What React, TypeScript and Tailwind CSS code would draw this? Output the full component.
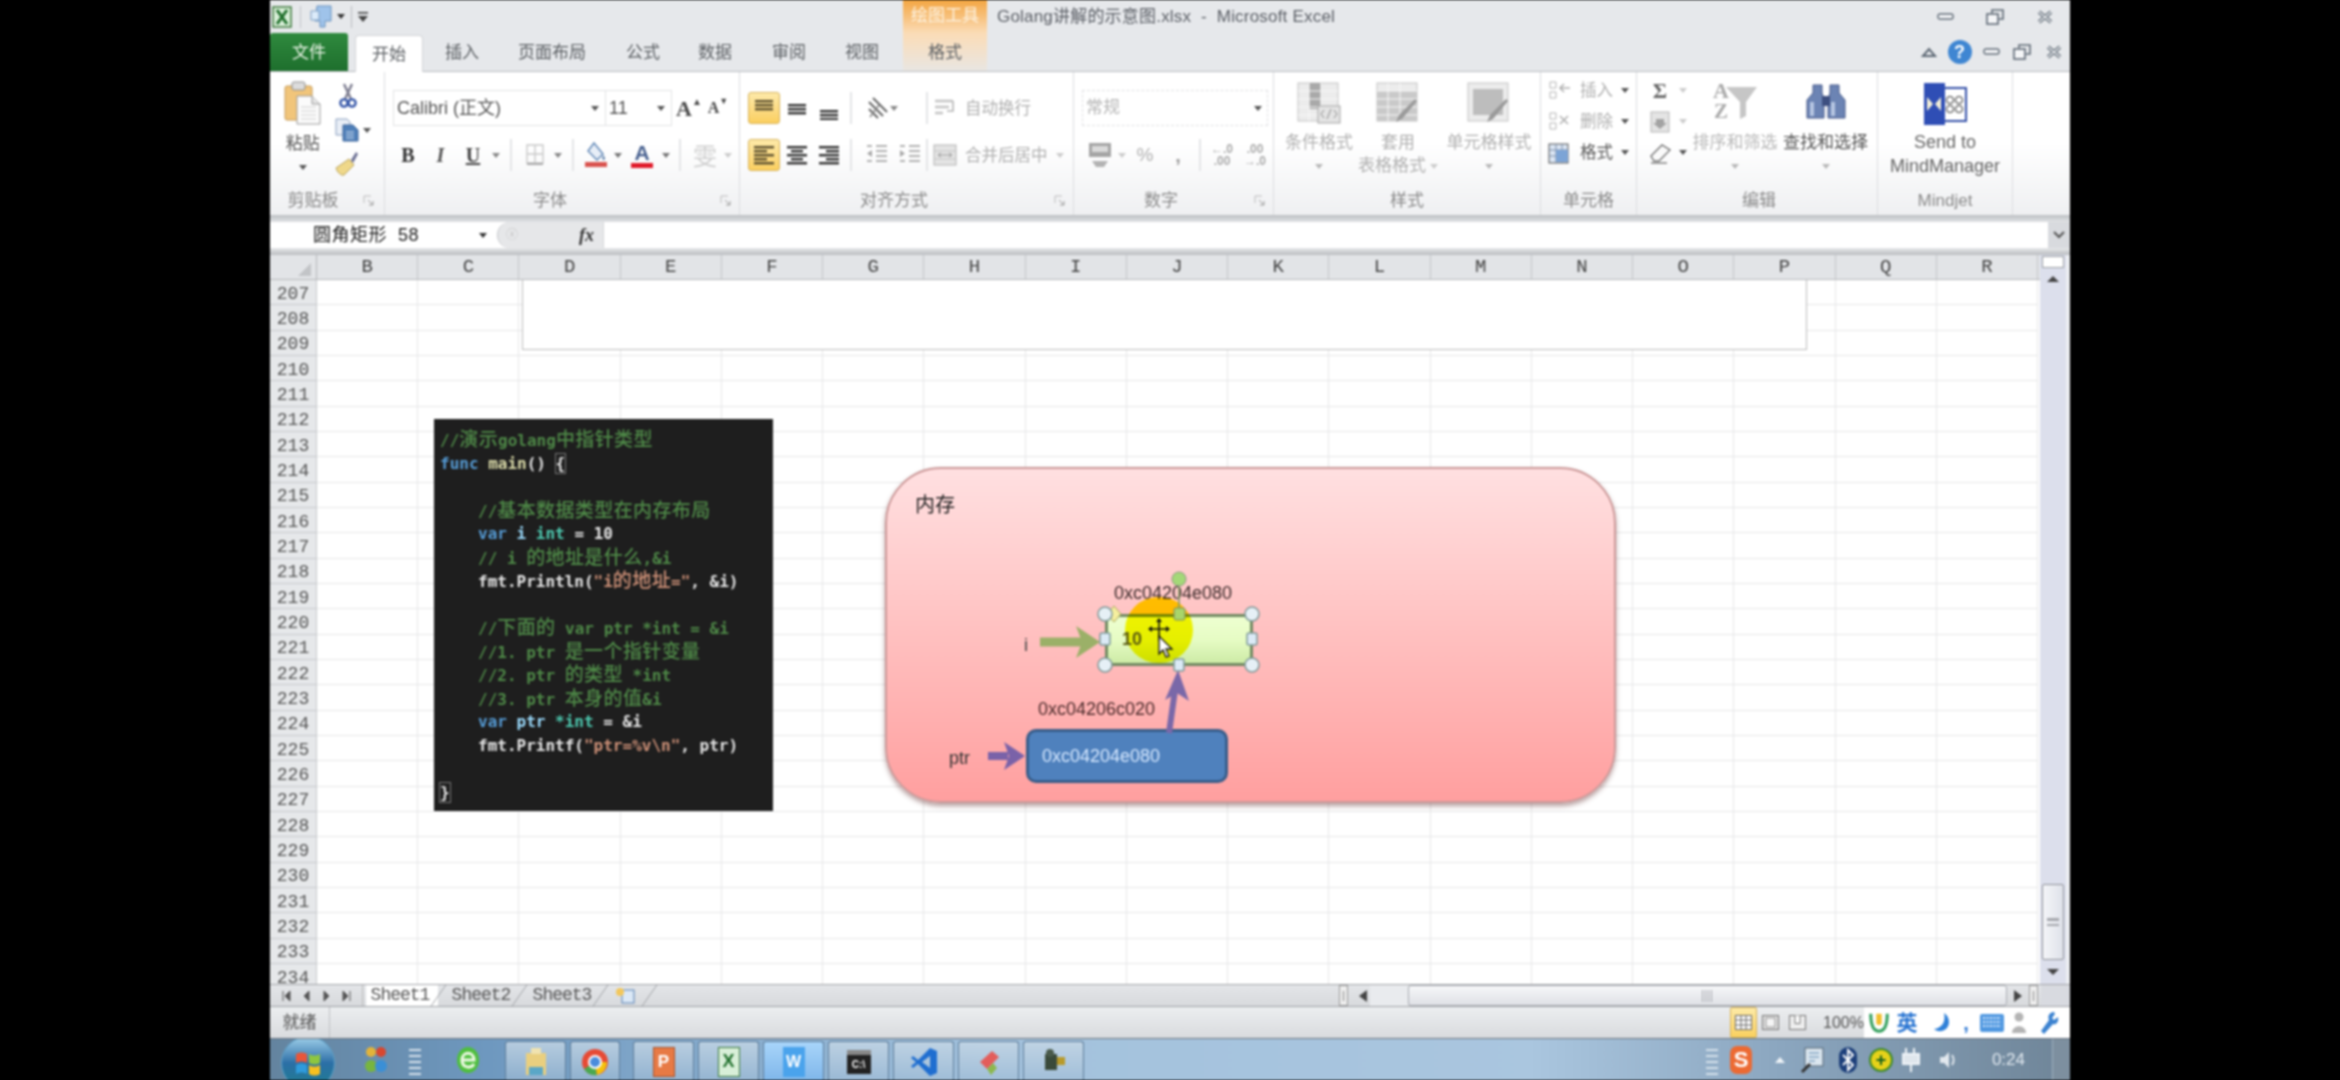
import React from "react";

const COLS = "BCDEFGHIJKLMNOPQR".split("");
const ROWS = Array.from({ length: 28 }, (_, i) => 207 + i);

function Caret({ className = "", color = "#555" }: { className?: string; color?: string }) {
  return (
    <svg width="8" height="5" viewBox="0 0 8 5" className={className}>
      <path d="M0 0h8L4 5z" fill={color} />
    </svg>
  );
}

function Launcher() {
  return (
    <svg width="12" height="12" viewBox="0 0 12 12">
      <path d="M1 1h7M1 1v7" stroke="#bbb" fill="none" />
      <path d="M5 5l5 5M10 6v4H6" stroke="#9a9a9a" fill="none" />
    </svg>
  );
}

function Sep({ className = "" }: { className?: string }) {
  return <div className={"w-[2px] h-[32px] bg-[#e4e5e7] shrink-0 " + className} />;
}

function Slot({ className, children }: { className: string; children?: React.ReactNode }) {
  return <div className={"flex items-center justify-center shrink-0 h-full " + className}>{children}</div>;
}

function Lines({ kind, color = "#333" }: { kind: "top" | "mid" | "bot" | "left" | "center" | "right"; color?: string }) {
  const sets: Record<string, number[][]> = {
    top: [[2, 4, 18], [2, 8, 18], [2, 12, 18]],
    mid: [[2, 8, 18], [2, 12, 18], [2, 16, 18]],
    bot: [[2, 14, 18], [2, 18, 18], [2, 22, 18]],
    left: [[1, 3, 20], [1, 7, 13], [1, 11, 20], [1, 15, 13], [1, 19, 20]],
    center: [[1, 3, 20], [5, 7, 12], [1, 11, 20], [5, 15, 12], [1, 19, 20]],
    right: [[1, 3, 20], [8, 7, 13], [1, 11, 20], [8, 15, 13], [1, 19, 20]],
  };
  return (
    <svg width="22" height="24" viewBox="0 0 22 24">
      {sets[kind].map((l, i) => (
        <rect key={i} x={l[0]} y={l[1]} width={l[2]} height="2.4" fill={color} />
      ))}
    </svg>
  );
}

function Paste() {
  return (
    <svg width="38" height="44" viewBox="0 0 38 44">
      <rect x="1" y="5" width="27" height="34" rx="2" fill="#f1c57a" stroke="#c49a58" />
      <rect x="8" y="1" width="13" height="8" rx="2" fill="#dcdcdc" stroke="#8f8f8f" />
      <path d="M13 15h15l8 8v20H13z" fill="#fbfbfb" stroke="#9a9a9a" />
      <path d="M17 26h15M17 30h15M17 34h15M17 38h15" stroke="#cfcfcf" />
      <path d="M28 15v8h8" fill="#e6e6e6" stroke="#9a9a9a" />
    </svg>
  );
}

function Scissors() {
  return (
    <svg width="20" height="26" viewBox="0 0 20 26">
      <path d="M6 1l7 15M14 1L7 16" stroke="#7d7d90" strokeWidth="2.4" />
      <circle cx="6" cy="20" r="3.6" fill="none" stroke="#3556a8" strokeWidth="2.4" />
      <circle cx="14" cy="20" r="3.6" fill="none" stroke="#3556a8" strokeWidth="2.4" />
    </svg>
  );
}

function CopyIcon() {
  return (
    <svg width="24" height="24" viewBox="0 0 24 24">
      <path d="M1 1h11l3 3v13H1z" fill="#e9eef6" stroke="#8ba0bf" />
      <path d="M8 7h10l5 5v11H8z" fill="#4f7fb8" stroke="#3c659b" />
      <path d="M11 14h8M11 17h8M11 20h8" stroke="#dce8f6" />
    </svg>
  );
}

function Brush() {
  return (
    <svg width="24" height="26" viewBox="0 0 24 26">
      <path d="M16 9l5-8 2 2-5 9z" fill="#6b6f93" />
      <path d="M1 17l13-9 5 6-10 10c-3 1-7-3-8-7z" fill="#efd88a" stroke="#b9a35c" />
    </svg>
  );
}

function Big({ className, icon, lines, caret = true, color = "text-[#9a9a9a]" }: { className: string; icon: React.ReactNode; lines: string[]; caret?: boolean; color?: string }) {
  return (
    <div className={"flex flex-col items-center shrink-0 " + className}>
      <div className="h-[59px] pt-[10px] flex items-start justify-center">{icon}</div>
      {lines.map((t) => (
        <div key={t} className={"h-[24px] leading-[24px] text-[17px] whitespace-nowrap " + color}>{t}</div>
      ))}
      {caret && (
        <div className="h-[22px] flex items-center">
          <Caret color="#b8b8b8" />
        </div>
      )}
    </div>
  );
}

function GridIcon({ kind }: { kind: "cond" | "table" | "cell" }) {
  return (
    <svg width="44" height="42" viewBox="0 0 44 42">
      <rect x="1" y="1" width="40" height="38" fill="#ececec" stroke="#c4c4c4" />
      {kind === "cond" && <rect x="12" y="1" width="12" height="26" fill="#a9a9a9" />}
      {kind === "table" && <rect x="1" y="9" width="40" height="30" fill="#c9c9c9" />}
      {kind === "cell" && <rect x="6" y="7" width="30" height="26" fill="#bdbdbd" />}
      {kind !== "cell" && <path d="M1 9h40M1 17h40M1 25h40M1 33h40M12 1v38M24 1v38" stroke="#f8f8f8" />}
      {kind === "cond" && (
        <>
          <rect x="21" y="24" width="22" height="17" fill="#e4e4e4" stroke="#a5a5a5" />
          <path d="M27 28l-3 4 3 4M37 28l3 4-3 4M34 27l-4 10" stroke="#8d8d8d" fill="none" />
        </>
      )}
      {kind !== "cond" && <path d="M41 19L26 37l-6 3 3-7 16-16z" fill="#9a9a9a" />}
    </svg>
  );
}

function SortIcon() {
  return (
    <div className="relative w-[44px] h-[40px] font-['Liberation_Serif',serif] font-bold text-[#ababab]">
      <svg width="44" height="40" viewBox="0 0 44 40" className="absolute inset-0">
        <path d="M13 5h31L33 20v14l-6 3V20z" fill="#c6c6c6" />
      </svg>
      <div className="absolute left-0 -top-[3px] text-[22px] leading-[24px]">A</div>
      <div className="absolute left-[1px] top-[17px] text-[21px] leading-[24px]">Z</div>
    </div>
  );
}

function Binoculars() {
  return (
    <svg width="40" height="38" viewBox="0 0 40 38">
      <path d="M7 3h9v8l2 6v19H1V18l6-7zM24 3h9v8l6 7v18H22V17l2-6z" fill="#6c84b4" stroke="#46598a" />
      <rect x="16" y="14" width="8" height="10" fill="#3d4f80" />
      <rect x="4" y="20" width="4" height="14" fill="#b6c6e2" />
      <rect x="25" y="20" width="4" height="14" fill="#b6c6e2" />
    </svg>
  );
}

function MindIcon() {
  return (
    <svg width="44" height="44" viewBox="0 0 44 44">
      <rect x="16" y="6" width="27" height="33" fill="#fff" stroke="#3450a8" strokeWidth="2" />
      <rect x="1" y="1" width="21" height="42" fill="#2f4eb5" />
      <path d="M4 15l6 7-6 7zM18 15l-6 7 6 7z" fill="#f4f0d8" />
      <circle cx="27" cy="18" r="3.5" fill="none" stroke="#777" strokeWidth="1.6" />
      <circle cx="36" cy="18" r="3.5" fill="none" stroke="#777" strokeWidth="1.6" />
      <circle cx="27" cy="27" r="3.5" fill="none" stroke="#777" strokeWidth="1.6" />
      <circle cx="36" cy="27" r="3.5" fill="none" stroke="#777" strokeWidth="1.6" />
    </svg>
  );
}

function MiniCell({ kind }: { kind: "ins" | "del" | "fmt" }) {
  return (
    <svg width="24" height="24" viewBox="0 0 24 24">
      {kind === "fmt" ? (
        <>
          <rect x="1" y="3" width="19" height="19" fill="#dbe6f4" stroke="#555" />
          <path d="M1 9h19M1 15h19M8 3v19M14 3v19" stroke="#7a8da8" />
          <rect x="8" y="9" width="12" height="12" fill="#7ca4d6" />
        </>
      ) : (
        <>
          <path d="M2 3h6v6H2zM2 13h6v6H2z" fill="none" stroke="#b5b5b5" />
          <path d={kind === "ins" ? "M12 9h10M16 5l-4 4 4 4" : "M12 6l8 8M20 6l-8 8"} stroke="#b0b0b0" strokeWidth="1.6" fill="none" />
        </>
      )}
    </svg>
  );
}

function WinControls({ compact = false }: { compact?: boolean }) {
  const c = "#5f6a76";
  return (
    <>
      <Slot className={compact ? "w-[29px]" : "w-[48px]"}>
        <svg width="18" height="8" viewBox="0 0 18 8"><rect x="1" y="1" width="15" height="5" rx="2" fill="#f5f6f8" stroke={c} strokeWidth="1.4" /></svg>
      </Slot>
      <Slot className={compact ? "w-[32px]" : "w-[50px]"}>
        <svg width="18" height="16" viewBox="0 0 18 16"><path d="M6 4V1h11v9h-4" fill="none" stroke={c} strokeWidth="1.6" /><rect x="1" y="5" width="11" height="10" fill="#f4f5f7" stroke={c} strokeWidth="1.6" /></svg>
      </Slot>
      <Slot className={compact ? "w-[32px]" : "w-[50px]"}>
        <svg width="18" height="14" viewBox="0 0 18 14"><path d="M3 2l12 10M15 2L3 12" stroke={c} strokeWidth="3.6" /><path d="M3 2l12 10M15 2L3 12" stroke="#f4f5f7" strokeWidth="1.4" /></svg>
      </Slot>
    </>
  );
}

function TitleBar() {
  return (
    <div className="h-[33px] flex items-stretch shrink-0">
      <Slot className="w-[24px]">
        <svg width="20" height="22" viewBox="0 0 20 22"><rect x="1" y="1" width="18" height="20" fill="#d8efd8" stroke="#3f7a3f" strokeWidth="1.5" /><path d="M5 4l10 14M15 4L5 18" stroke="#1f6f2b" strokeWidth="3" /></svg>
      </Slot>
      <Slot className="w-[12px]"><div className="w-[1px] h-[22px] bg-[#c2c5c9]" /></Slot>
      <Slot className="w-[30px]">
        <svg width="24" height="26" viewBox="0 0 24 26"><path d="M8 2h14v15h-6v6h-5v-6H6z" fill="#9fc3ea" stroke="#6b93bf" /><path d="M2 7h8v9H2z" fill="#dcebfa" stroke="#7ea0c4" /></svg>
      </Slot>
      <Slot className="w-[9px]"><Caret color="#333" /></Slot>
      <Slot className="w-[12px]"><div className="w-[1px] h-[22px] bg-[#b9bcc0]" /></Slot>
      <Slot className="w-[12px]">
        <svg width="10" height="12" viewBox="0 0 10 12"><rect width="10" height="1.6" y="1" fill="#444" /><path d="M0 5h10L5 11z" fill="#444" /></svg>
      </Slot>
      <div className="w-[534px] shrink-0" />
      <div className="w-[84px] shrink-0 bg-gradient-to-b from-[#f3a640] via-[#f7c07a] to-[#fbdcb6] text-[#fdf3e2] text-[17px] leading-[31px] text-center">绘图工具</div>
      <div className="ml-[10px] w-[370px] text-[17px] leading-[33px] text-[#5b5f66] whitespace-nowrap tracking-[0.2px]">Golang讲解的示意图.xlsx&nbsp;&nbsp;-&nbsp;&nbsp;Microsoft Excel</div>
      <div className="flex-1" />
      <WinControls />
    </div>
  );
}

function Tab({ className, children }: { className: string; children: React.ReactNode }) {
  return <div className={"flex items-center justify-center shrink-0 text-[17px] text-[#5b5f63] h-full pt-[2px] " + className}>{children}</div>;
}

function TabsRow() {
  return (
    <div className="h-[39px] flex items-stretch shrink-0 border-b border-[#b9bcc0]">
      <Tab className="w-[78px] mr-[7px] !text-[#eef6ea] rounded-t-[3px] bg-gradient-to-b from-[#2f8a3e] to-[#1e6f2d]">文件</Tab>
      <Tab className="w-[68px] bg-white rounded-t-[4px] border border-b-0 border-[#d2d4d7] mt-[2px] !h-[37px]">开始</Tab>
      <Tab className="w-[78px]">插入</Tab>
      <Tab className="w-[102px]">页面布局</Tab>
      <Tab className="w-[80px]">公式</Tab>
      <Tab className="w-[64px]">数据</Tab>
      <Tab className="w-[84px]">审阅</Tab>
      <Tab className="w-[62px]">视图</Tab>
      <Tab className="w-[84px] ml-[10px] bg-gradient-to-b from-[#fbdcb6] to-[#e9e6e2]">格式</Tab>
      <div className="flex-1" />
      <Slot className="w-[20px]">
        <svg width="16" height="10" viewBox="0 0 16 10"><path d="M2 9l6-7 6 7z" fill="none" stroke="#5f6a76" strokeWidth="2" /></svg>
      </Slot>
      <Slot className="w-[38px] pl-[3px]">
        <div className="w-[24px] h-[24px] rounded-full bg-[#3f86d2] text-white text-[18px] font-bold flex items-center justify-center leading-none">?</div>
      </Slot>
      <WinControls compact />
    </div>
  );
}

function Group({ className, children, label, labelW, launcher = true, labelColor = "text-[#8a8a8a]" }: { className: string; children: React.ReactNode; label: string; labelW: string; launcher?: boolean; labelColor?: string }) {
  return (
    <div className={"flex flex-col h-full shrink-0 border-r border-[#dcdde0] " + className}>
      <div className="h-[113px]">{children}</div>
      <div className="h-[30px] flex items-center pt-[2px]">
        <div className={"text-center text-[17px] shrink-0 " + labelW + " " + labelColor}>{label}</div>
        {launcher && <div className="flex-1 flex justify-center pr-[2px]"><Launcher /></div>}
      </div>
    </div>
  );
}

function Ribbon() {
  return (
    <div className="h-[143px] flex shrink-0 bg-gradient-to-b from-white via-white to-[#eff0f2] text-[#666]">
      <Group className="w-[115px]" label="剪贴板" labelW="w-[86px]">
        <div className="flex">
          <div className="w-[66px] flex flex-col items-center pt-[9px]">
            <div className="h-[51px]"><Paste /></div>
            <div className="h-[24px] leading-[24px] text-[17px] text-[#555]">粘贴</div>
            <div className="h-[22px] flex items-center"><Caret /></div>
          </div>
          <div className="w-[49px] pt-[7px] flex flex-col">
            <div className="h-[34px] flex items-center pl-[3px]"><Scissors /></div>
            <div className="h-[34px] flex items-center gap-[4px]"><CopyIcon /><Caret /></div>
            <div className="h-[34px] flex items-center"><Brush /></div>
          </div>
        </div>
      </Group>

      <Group className="w-[355px]" label="字体" labelW="w-[330px]">
        <div className="pt-[18px] pl-[8px]">
          <div className="flex h-[36px]">
            <div className="w-[213px] border border-[#e2e3e5] flex items-center justify-between pl-[3px] pr-[6px] text-[18px] text-[#555]">
              <span>Calibri (正文)</span><Caret />
            </div>
            <div className="w-[66px] border border-l-0 border-[#e2e3e5] flex items-center justify-between pl-[3px] pr-[6px] text-[18px] text-[#555]">
              <span>11</span><Caret />
            </div>
            <div className="w-[32px] ml-[1px] flex items-center justify-center font-['Liberation_Serif',serif] font-bold text-[22px] text-[#4a4a4a]">A<span className="text-[10px] self-start mt-[4px]">▲</span></div>
            <div className="w-[26px] flex items-center justify-center font-['Liberation_Serif',serif] font-bold text-[16px] text-[#4a4a4a]">A<span className="text-[9px] self-start mt-[5px]">▼</span></div>
          </div>
          <div className="flex h-[34px] mt-[12px] items-center -ml-[1px] font-['Liberation_Serif',serif]">
            <Slot className="w-[32px] font-bold text-[20px] text-[#333]">B</Slot>
            <Slot className="w-[33px] italic font-bold text-[20px] text-[#555]">I</Slot>
            <Slot className="w-[32px] font-bold text-[20px] text-[#444] underline">U</Slot>
            <Slot className="w-[14px]"><Caret color="#888" /></Slot>
            <Sep className="ml-[7px]" />
            <Slot className="w-[36px] ml-[5px]">
              <svg width="22" height="26" viewBox="0 0 22 26"><path d="M3 3h16v18H3zM3 12h16M11 3v18" fill="none" stroke="#c9c9c9" strokeWidth="1.4" /><rect x="3" y="21" width="16" height="2" fill="#aaa" /></svg>
            </Slot>
            <Slot className="w-[10px]"><Caret color="#888" /></Slot>
            <Sep className="ml-[9px]" />
            <Slot className="w-[36px] ml-[4px]">
              <svg width="26" height="28" viewBox="0 0 26 28"><path d="M11 2l9 11-6 6-9-9z" fill="#e7eef7" stroke="#5f86b5" strokeWidth="1.4" /><path d="M20 14c2 2 3 4 1 5s-2-3-1-5z" fill="#6f8db3" /><rect x="2" y="21" width="22" height="5" fill="#d9534f" /></svg>
            </Slot>
            <Slot className="w-[8px]"><Caret color="#777" /></Slot>
            <Slot className="w-[40px]">
              <div className="flex flex-col items-center font-['Liberation_Sans',sans-serif] text-[21px] font-bold text-[#47608f] leading-[20px]">A<div className="w-[22px] h-[5px] bg-[#e01b2b]" /></div>
            </Slot>
            <Slot className="w-[8px]"><Caret color="#777" /></Slot>
            <Sep className="ml-[9px]" />
            <Slot className="w-[36px] ml-[6px] text-[24px] text-[#cfcfcf] font-['Noto_Sans_CJK_SC',sans-serif]">雯</Slot>
            <Slot className="w-[10px]"><Caret color="#ccc" /></Slot>
          </div>
        </div>
      </Group>

      <Group className="w-[334px]" label="对齐方式" labelW="w-[308px]">
        <div className="pt-[20px] pl-[8px]">
          <div className="flex h-[32px] items-center">
            <Slot className="w-[32px] bg-gradient-to-b from-[#fde9a8] to-[#fbcf5f] border border-[#d8b45c] rounded-[3px]"><Lines kind="top" color="#5e5230" /></Slot>
            <Slot className="w-[33px]"><Lines kind="mid" /></Slot>
            <Slot className="w-[32px]"><Lines kind="bot" /></Slot>
            <Sep className="ml-[5px]" />
            <Slot className="w-[24px] ml-[14px]">
              <svg width="24" height="26" viewBox="0 0 24 26"><path d="M3 7l14 14M7 3l14 14M3 14l9 9" stroke="#666" strokeWidth="2" /><path d="M4 22l9-12" stroke="#8a8a8a" strokeWidth="1.5" /></svg>
            </Slot>
            <Slot className="w-[8px]"><Caret color="#888" /></Slot>
            <Sep className="ml-[28px]" />
            <Slot className="w-[26px] ml-[4px]">
              <svg width="24" height="22" viewBox="0 0 24 22"><path d="M2 4h18M2 10h14M2 16h8" stroke="#c4c4c4" strokeWidth="2.4" /><path d="M20 4v10h-6" stroke="#b4b4b4" fill="none" strokeWidth="1.6" /></svg>
            </Slot>
            <div className="ml-[7px] text-[16.5px] text-[#b0b0b0] whitespace-nowrap">自动换行</div>
          </div>
          <div className="flex h-[32px] mt-[15px] items-center">
            <Slot className="w-[32px] bg-gradient-to-b from-[#fde9a8] to-[#fbcf5f] border border-[#d8b45c] rounded-[3px]"><Lines kind="left" color="#5e5230" /></Slot>
            <Slot className="w-[33px]"><Lines kind="center" /></Slot>
            <Slot className="w-[32px]"><Lines kind="right" /></Slot>
            <Sep className="ml-[5px]" />
            <Slot className="w-[34px] ml-[8px]">
              <svg width="24" height="22" viewBox="0 0 24 22"><path d="M11 2h11M11 7h11M11 12h11M11 17h11M2 2h5M2 17h5" stroke="#b2b2b2" strokeWidth="2" /><path d="M7 6L2 9.5 7 13z" fill="#a8a8a8" /></svg>
            </Slot>
            <Slot className="w-[32px]">
              <svg width="24" height="22" viewBox="0 0 24 22"><path d="M11 2h11M11 7h11M11 12h11M11 17h11M2 2h5M2 17h5" stroke="#b2b2b2" strokeWidth="2" /><path d="M2 6l5 3.5L2 13z" fill="#a8a8a8" /></svg>
            </Slot>
            <Sep />
            <Slot className="w-[26px] ml-[4px]">
              <svg width="24" height="24" viewBox="0 0 24 24"><rect x="1" y="2" width="22" height="20" fill="#e4e4e4" stroke="#b4b4b4" /><path d="M1 8h22M1 16h22" stroke="#c4c4c4" /><path d="M5 12h14M5 12l3-2M5 12l3 2M19 12l-3-2M19 12l-3 2" stroke="#9a9a9a" /></svg>
            </Slot>
            <div className="ml-[7px] text-[16.5px] text-[#b0b0b0] whitespace-nowrap">合并后居中</div>
            <Caret color="#ccc" className="ml-[8px]" />
          </div>
        </div>
      </Group>

      <Group className="w-[200px]" label="数字" labelW="w-[174px]">
        <div className="pt-[18px] pl-[8px]">
          <div className="w-[186px] h-[36px] border border-dashed border-[#e0e1e3] flex items-center justify-between pl-[3px] pr-[5px] text-[17px] text-[#b5b5b5]">
            <span>常规</span><Caret color="#555" />
          </div>
          <div className="flex h-[34px] mt-[12px] items-center">
            <Slot className="w-[36px]">
              <svg width="26" height="28" viewBox="0 0 26 28"><rect x="2" y="2" width="22" height="14" fill="#a5a5a5" /><rect x="5" y="5" width="16" height="6" fill="#dadada" /><path d="M5 20h16l-4 6H9z" fill="#b3b3b3" /></svg>
            </Slot>
            <Slot className="w-[8px]"><Caret color="#ccc" /></Slot>
            <Slot className="w-[38px] text-[19px] text-[#b0b0b0]">%</Slot>
            <Slot className="w-[28px] text-[20px] font-bold text-[#9c9c9c]">,</Slot>
            <Sep className="ml-[7px]" />
            <Slot className="w-[42px] text-[12px] leading-[12px] text-[#aaa] font-bold text-center flex-col">
              <span>←.0</span><span>.00</span>
            </Slot>
            <Slot className="w-[24px] text-[12px] leading-[12px] text-[#aaa] font-bold text-center flex-col">
              <span>.00</span><span>→.0</span>
            </Slot>
          </div>
        </div>
      </Group>

      <Group className="w-[267px]" label="样式" labelW="w-full" launcher={false}>
        <div className="flex">
          <Big className="w-[90px]" icon={<GridIcon kind="cond" />} lines={["条件格式"]} color="text-[#b0b0b0]" />
          <div className="w-[68px] flex flex-col items-center shrink-0">
            <div className="h-[59px] pt-[10px]"><GridIcon kind="table" /></div>
            <div className="h-[24px] leading-[24px] text-[17px] text-[#b0b0b0]">套用</div>
            <div className="h-[22px] flex items-center text-[17px] text-[#b0b0b0] whitespace-nowrap gap-[4px]">表格格式<Caret color="#ccc" /></div>
          </div>
          <Big className="w-[109px] pl-[5px]" icon={<GridIcon kind="cell" />} lines={["单元格样式"]} color="text-[#b0b0b0]" />
        </div>
      </Group>

      <Group className="w-[96px]" label="单元格" labelW="w-full" launcher={false}>
        <div className="pt-[3px]">
          {([["ins", "插入", "text-[#b0b0b0]"], ["del", "删除", "text-[#b0b0b0]"], ["fmt", "格式", "text-[#555]"]] as const).map(([k, t, c]) => (
            <div key={t} className="h-[31px] flex items-center pl-[7px]">
              <Slot className="w-[32px] justify-start"><MiniCell kind={k} /></Slot>
              <span className={"w-[35px] text-[16.5px] whitespace-nowrap " + c}>{t}</span>
              <Caret className="ml-[6px]" />
            </div>
          ))}
        </div>
      </Group>

      <Group className="w-[241px]" label="编辑" labelW="w-[244px]" launcher={false}>
        <div className="flex">
          <div className="w-[60px] pt-[3px] shrink-0">
            <div className="h-[31px] flex items-center pl-[11px] gap-[7px]">
              <span className="w-[24px] text-center text-[22px] font-bold text-[#666] font-['Liberation_Serif',serif]">Σ</span><Caret color="#ccc" />
            </div>
            <div className="h-[31px] flex items-center pl-[11px] gap-[7px]">
              <svg width="24" height="24" viewBox="0 0 24 24"><rect x="3" y="2" width="18" height="20" fill="#e4e4e4" stroke="#b6b6b6" /><path d="M8 9h8v4h3l-7 6-7-6h3z" fill="#a3a3a3" /></svg>
              <Caret color="#ccc" />
            </div>
            <div className="h-[31px] flex items-center pl-[11px] gap-[7px]">
              <svg width="24" height="22" viewBox="0 0 24 22"><path d="M3 14L14 3l8 5-11 11H6z" fill="#fafafa" stroke="#777" strokeWidth="1.4" /><path d="M3 21h16" stroke="#777" strokeWidth="1.4" /></svg>
              <Caret />
            </div>
          </div>
          <Big className="w-[76px]" icon={<SortIcon />} lines={["排序和筛选"]} color="text-[#b8b8b8]" />
          <Big className="w-[105px]" icon={<Binoculars />} lines={["查找和选择"]} color="text-[#555]" />
        </div>
      </Group>

      <Group className="w-[135px]" label="Mindjet" labelW="w-full" launcher={false}>
        <div className="flex flex-col items-center pt-[10px]">
          <div className="h-[48px]"><MindIcon /></div>
          <div className="h-[24px] leading-[24px] text-[18px] text-[#666]">Send to</div>
          <div className="h-[24px] leading-[24px] text-[18px] text-[#666]">MindManager</div>
        </div>
      </Group>
      <div className="flex-1" />
    </div>
  );
}

function FormulaBar() {
  return (
    <div className="h-[26px] bg-white flex items-center shrink-0">
      <div className="w-[227px] pl-[43px] flex items-center text-[18px] text-[#222] whitespace-nowrap">
        <span className="w-[166px] tracking-[0.5px]">圆角矩形&nbsp;&nbsp;58</span>
        <Caret color="#333" />
      </div>
      <div className="w-[106px] h-full rounded-l-[14px] bg-[#e6e7e9] border-l border-[#c6c8cc] flex items-center justify-between pl-[8px] pr-[9px]">
        <span className="text-[12px] text-[#c4c4c4]">ⓧ</span>
        <span className="font-['Liberation_Serif',serif] italic font-bold text-[18px] text-[#333]">fx</span>
      </div>
      <div className="flex-1 h-full border-l border-[#d6d7da]" />
      <Slot className="w-[22px] bg-[#d8dade]">
        <svg width="12" height="8" viewBox="0 0 12 8"><path d="M1 1l5 5 5-5" fill="none" stroke="#555" strokeWidth="2" /></svg>
      </Slot>
    </div>
  );
}

const blue = "text-[#569cd6]";
const green = "text-[#4f8a48] font-bold";
const white = "text-[#e6e6e6] font-bold";
const yellow = "text-[#dcdcaa] font-bold";
const teal = "text-[#4ec9b0] font-bold";
const sky = "text-[#9cdcfe] font-bold";
const orange = "text-[#ce9178]";

function Z({ children }: { children: React.ReactNode }) {
  return <span className="text-[19px] font-['Noto_Sans_CJK_SC',sans-serif] font-medium leading-none tracking-[0.4px]">{children}</span>;
}

function CodeLine({ indent = false, children }: { indent?: boolean; children?: React.ReactNode }) {
  return <div className={"h-[23.5px] leading-[23.5px] whitespace-pre " + (indent ? "pl-[38px]" : "")}>{children}</div>;
}

function CodeBox() {
  return (
    <div className="absolute left-[164px] top-[139px] w-[339px] h-[392px] bg-[#1e1e1e] pl-[6px] pt-[9px] text-[16px] font-['DejaVu_Sans_Mono','Noto_Sans_CJK_SC',monospace] overflow-hidden">
      <CodeLine><span className={green}>//<Z>演示</Z>golang<Z>中指针类型</Z></span></CodeLine>
      <CodeLine><span className={blue + " font-bold"}>func</span> <span className={yellow}>main</span><span className={white}>()</span> <span className={white + " outline outline-1 outline-[#777]"}>{"{"}</span></CodeLine>
      <CodeLine />
      <CodeLine indent><span className={green}>//<Z>基本数据类型在内存布局</Z></span></CodeLine>
      <CodeLine indent><span className={blue + " font-bold"}>var</span> <span className={sky}>i</span> <span className={teal}>int</span> <span className={white}>= 10</span></CodeLine>
      <CodeLine indent><span className={green}>// i <Z>的地址是什么</Z>,&amp;i</span></CodeLine>
      <CodeLine indent><span className={white}>fmt.Println(</span><span className={orange + " font-bold"}>"i<Z>的地址</Z>="</span><span className={white}>, &amp;i)</span></CodeLine>
      <CodeLine />
      <CodeLine indent><span className={green}>//<Z>下面的</Z> var ptr *int = &amp;i</span></CodeLine>
      <CodeLine indent><span className={green}>//1. ptr <Z>是一个指针变量</Z></span></CodeLine>
      <CodeLine indent><span className={green}>//2. ptr <Z>的类型</Z> *int</span></CodeLine>
      <CodeLine indent><span className={green}>//3. ptr <Z>本身的值</Z>&amp;i</span></CodeLine>
      <CodeLine indent><span className={blue + " font-bold"}>var</span> <span className={sky}>ptr</span> <span className={teal}>*int</span> <span className={white}>= &amp;i</span></CodeLine>
      <CodeLine indent><span className={white}>fmt.Printf(</span><span className={orange + " font-bold"}>"ptr=%v\n"</span><span className={white}>, ptr)</span></CodeLine>
      <CodeLine />
      <CodeLine><span className={white + " outline outline-1 outline-[#777]"}>{"}"}</span></CodeLine>
    </div>
  );
}

function Diagram() {
  const sq = [[1105, 639], [1252, 639], [1179, 665]];
  const rd = [[1105, 614], [1252, 614], [1105, 665], [1252, 665]];
  return (
    <div className="absolute left-[615px] top-[187px] w-[731px] h-[336px] rounded-[56px] border-2 border-[#c99] bg-gradient-to-b from-[#ffe0e1] to-[#ff9f9f] shadow-[0_3px_5px_rgba(90,40,40,0.45)] text-[18px] text-[#333]">
      <div className="absolute left-[28px] top-[21px] text-[20px] text-[#222]">内存</div>
      <div className="absolute left-[227px] top-[112px] leading-[24px] text-[#3a2a2a]">0xc04204e080</div>
      <div className="absolute left-[218px] top-[145px] w-[148px] h-[52px] border-[3px] border-[#718a62] bg-gradient-to-b from-[#eeffd0] via-[#e6fcc4] to-[#cdeba6]" />
      <div className="absolute left-[238px] top-[128px] w-[68px] h-[66px] rounded-full bg-[#fff200] mix-blend-multiply" />
      <div className="absolute left-[235px] top-[158px] leading-[24px] font-bold text-[#5a5a10]">10</div>
      <div className="absolute left-[137px] top-[164px] leading-[24px] text-[#444]">i</div>
      <div className="absolute left-[151px] top-[228px] leading-[24px] text-[#4a2a2a]">0xc04206c020</div>
      <div className="absolute left-[139px] top-[260px] w-[202px] h-[54px] rounded-[10px] border-[3px] border-[#385d8a] bg-[#4f81bd] flex items-center pl-[13px] text-[#d6e8ff]">0xc04204e080</div>
      <div className="absolute left-[62px] top-[277px] leading-[24px] text-[#333]">ptr</div>
      <svg viewBox="885 467 729 334" className="absolute -left-[2px] -top-[2px] w-[729px] h-[334px] overflow-visible">
        <path d="M1040 642h42" stroke="#9bb068" strokeWidth="9" />
        <path d="M1076 626l24 16-24 16 6-16z" fill="#9bb068" />
        <path d="M988 756h20" stroke="#7a62a8" strokeWidth="8" />
        <path d="M1004 742l21 14-21 14 5-14z" fill="#7a62a8" />
        <path d="M1169 733l7-50" stroke="#7a68a8" strokeWidth="6" />
        <path d="M1178 670l-13 30 12-7 12 8z" fill="#7a68a8" />
        <path d="M1179 586v28" stroke="#7f9a60" strokeWidth="1.5" />
        <circle cx="1179" cy="579" r="7" fill="#a4d878" stroke="#8a9a80" />
        <rect x="1174" y="608" width="11" height="12" rx="2" fill="#a9d56a" stroke="#788a60" />
        <path d="M1114 606l7 8-7 8-7-8z" fill="#f5ef9e" stroke="#a8a860" />
        {rd.map(([x, y]) => (
          <circle key={x + "-" + y} cx={x} cy={y} r="7" fill="#e6f0f6" stroke="#7f9a9a" strokeWidth="1.5" />
        ))}
        {sq.map(([x, y]) => (
          <rect key={x + "-" + y} x={x - 5} y={y - 6} width="10" height="12" rx="2" fill="#dbeaf6" stroke="#7f9a9a" strokeWidth="1.5" />
        ))}
        <path d="M1159 619v22M1149 629h20" stroke="#111" strokeWidth="1.6" />
        <path d="M1159 618l-3 4h6zM1148 629l4-3v6zM1170 629l-4-3v6z" fill="#111" />
        <path d="M1159 636v18l4-4 3 7 3-1-3-7h6z" fill="#fff" stroke="#111" strokeWidth="1.3" />
      </svg>
    </div>
  );
}

function Sheet() {
  return (
    <div className="flex-1 min-h-0 flex overflow-hidden">
      <div className="w-[1770px] flex flex-col">
        <div className="h-[25px] grid grid-cols-[47px_repeat(17,101.24px)] shrink-0 bg-[#e2e4e7] border-b border-[#b6b8bb] font-['Liberation_Mono',monospace] text-[19px] text-[#444]">
          <div className="border-r border-[#b6b8bb] flex items-end justify-end pr-[5px] pb-[3px]">
            <svg width="13" height="13" viewBox="0 0 13 13"><path d="M13 0v13H0z" fill="#c2c4c7" /></svg>
          </div>
          {COLS.map((c) => (
            <div key={c} className="border-r border-[#c4c6c9] flex items-center justify-center leading-none">{c}</div>
          ))}
        </div>
        <div className="relative h-[704px] overflow-hidden bg-white">
          <div className="grid grid-cols-[47px_repeat(17,101.24px)] auto-rows-[25.33px] font-['Liberation_Mono',monospace]">
            {ROWS.map((r) => (
              <React.Fragment key={r}>
                <div className="bg-[#e6e8ea] border-r border-b border-[#c8cacd] text-[18px] text-[#555] flex items-center justify-center pt-[3px] leading-none">{r}</div>
                {COLS.map((c) => (
                  <div key={c} className="border-r border-b border-[#e6e7e8]" />
                ))}
              </React.Fragment>
            ))}
          </div>
          <div className="absolute left-[252px] top-0 w-[1285px] h-[70px] border border-t-0 border-[#bdbdbd] bg-white" />
          <CodeBox />
          <Diagram />
        </div>
      </div>
      <div className="w-[30px] flex">
        <div className="w-[26px] bg-[#dcdfec] flex flex-col items-center">
          <div className="h-[12px] w-[22px] mt-[1px] bg-white border border-[#9a9da3]" />
          <div className="h-[22px] flex items-center"><svg width="12" height="6" viewBox="0 0 12 6"><path d="M0 6h12L6 0z" fill="#444" /></svg></div>
          <div className="flex-1" />
          <div className="h-[76px] w-[22px] rounded-[2px] border border-[#8f9299] bg-gradient-to-r from-[#f4f5f8] to-[#dfe2ea] flex items-center justify-center">
            <div className="w-[12px] h-[8px] border-y-2 border-[#a5a7ad] bg-[linear-gradient(#a5a7ad_1px,transparent_1px)]" />
          </div>
          <div className="h-[24px] flex items-center"><svg width="12" height="6" viewBox="0 0 12 6"><path d="M0 0h12L6 6z" fill="#444" /></svg></div>
        </div>
        <div className="flex-1 bg-[#eceef2]" />
      </div>
    </div>
  );
}

function SheetTab({ className, children }: { className: string; children: React.ReactNode }) {
  return (
    <div className={"flex items-center justify-center h-full text-[18px] text-[#555] shrink-0 font-['Liberation_Mono',monospace] tracking-[-1px] " + className}>
      {children}
    </div>
  );
}

function Slant() {
  return <div className="w-[1px] h-full bg-[#a0a2a6] -skew-x-[35deg] shrink-0" />;
}

function TabsBar() {
  return (
    <div className="h-[23px] flex shrink-0 bg-gradient-to-b from-[#e3e5e8] to-[#d8dadd] border-t border-[#a4a6aa] border-b border-b-[#9ea1a5]">
      <div className="w-[93px] flex items-center justify-around px-[6px] shrink-0 border-r border-[#bbb]">
        {["M2 1v10M9 1L4 6l5 5z", "M8 1L3 6l5 5z", "M3 1l5 5-5 5z", "M9 1v10M2 1l5 5-5 5z"].map((d) => (
          <svg key={d} width="11" height="12" viewBox="0 0 11 12"><path d={d} fill="#555" stroke="#555" /></svg>
        ))}
      </div>
      <SheetTab className="w-[72px] ml-[3px] bg-white pr-[4px]">Sheet1</SheetTab>
      <Slant />
      <SheetTab className="w-[80px] pl-[4px]">Sheet2</SheetTab>
      <Slant />
      <SheetTab className="w-[80px] pl-[4px]">Sheet3</SheetTab>
      <Slant />
      <Slot className="w-[48px]">
        <svg width="22" height="18" viewBox="0 0 22 18"><rect x="8" y="3" width="12" height="13" fill="#dbe8f6" stroke="#5b83b5" /><circle cx="6" cy="5" r="4" fill="#f2c75c" /></svg>
      </Slot>
      <Slant />
      <div className="w-[689px] shrink-0" />
      <Slot className="w-[9px] border border-[#999] bg-[#eee] mr-[8px]"><div className="w-[1px] h-[10px] bg-[#888]" /></Slot>
      <Slot className="w-[14px]"><svg width="8" height="12" viewBox="0 0 8 12"><path d="M8 0v12L0 6z" fill="#444" /></svg></Slot>
      <div className="w-[38px] shrink-0 bg-[#e9ebee]" />
      <div className="w-[599px] shrink-0 rounded-[3px] border border-[#a9acb2] bg-gradient-to-b from-[#f6f7f9] to-[#dfe1e6] flex items-center justify-center">
        <div className="w-[11px] h-[12px] bg-[repeating-linear-gradient(90deg,#a5a7ad_0_1px,transparent_1px_3px)]" />
      </div>
      <Slot className="w-[22px]"><svg width="8" height="12" viewBox="0 0 8 12"><path d="M0 0v12l8-6z" fill="#444" /></svg></Slot>
      <Slot className="w-[9px] border border-[#999] bg-[#eee]"><div className="w-[1px] h-[10px] bg-[#888]" /></Slot>
      <div className="flex-1 bg-[#d8dae0] ml-[3px]" />
    </div>
  );
}

function StatusBar() {
  return (
    <div className="h-[31px] flex items-center shrink-0 bg-gradient-to-b from-[#eceef0] to-[#d9dbde] text-[#555]">
      <div className="w-[60px] h-full flex items-center justify-center text-[17px] border-r border-[#bfc1c4] shrink-0">就绪</div>
      <div className="w-[1400px] shrink-0" />
      <Slot className="w-[27px] bg-gradient-to-b from-[#fdeaa6] to-[#f9d05e] border border-[#d8b45c] rounded-[2px]">
        <svg width="17" height="15" viewBox="0 0 17 15"><rect x=".5" y=".5" width="16" height="14" fill="#fff" stroke="#666" /><path d="M.5 5h16M.5 10h16M6 .5v14M11 .5v14" stroke="#666" /></svg>
      </Slot>
      <Slot className="w-[26px]">
        <svg width="17" height="15" viewBox="0 0 17 15"><rect x=".5" y=".5" width="16" height="14" fill="#ddd" stroke="#777" /><rect x="4" y="3" width="9" height="9" fill="#f5f5f5" stroke="#999" /></svg>
      </Slot>
      <Slot className="w-[29px]">
        <svg width="17" height="15" viewBox="0 0 17 15"><rect x=".5" y=".5" width="16" height="14" fill="#eee" stroke="#777" /><path d="M6 .5v8h5v-8" fill="#fff" stroke="#777" /></svg>
      </Slot>
      <div className="w-[52px] text-[16px] pl-[11px] overflow-hidden whitespace-nowrap shrink-0">100%</div>
      <div className="flex-1 h-full bg-white flex items-center pl-[4px]">
        <Slot className="w-[22px]">
          <svg width="24" height="26" viewBox="0 0 24 26"><path d="M3 3c0 14 3 19 9 19s9-5 9-19" fill="none" stroke="#36a15f" strokeWidth="3.4" /><path d="M9 3v10c0 3 6 3 6 0V3z" fill="#f1bf2d" /></svg>
        </Slot>
        <Slot className="w-[34px] text-[21px] text-[#2b76d2] font-bold">英</Slot>
        <Slot className="w-[34px]">
          <svg width="18" height="24" viewBox="0 0 18 24"><path d="M12 2c2 9-2 15-10 16 6 5 15 1 15-7 0-4-2-7-5-9z" fill="#2f80d8" /></svg>
        </Slot>
        <Slot className="w-[16px] text-[20px] font-bold text-[#2b76d2] leading-none">,</Slot>
        <Slot className="w-[36px]">
          <svg width="26" height="20" viewBox="0 0 26 20"><rect x="1" y="1" width="24" height="18" rx="2" fill="#4f97e0" /><path d="M4 5h18M4 9h18M4 13h18" stroke="#d6eaff" strokeWidth="2" strokeDasharray="2 1.5" /></svg>
        </Slot>
        <Slot className="w-[18px]">
          <svg width="18" height="24" viewBox="0 0 18 24"><circle cx="9" cy="6" r="4.5" fill="#b4b4b4" /><path d="M2 22c0-9 14-9 14 0z" fill="#b4b4b4" /></svg>
        </Slot>
        <Slot className="w-[42px]">
          <svg width="20" height="24" viewBox="0 0 20 24"><path d="M15 1c-4 0-7 4-5 8L2 20l3 3 9-10c3 1 6-2 5-7l-4 3-2-2 3-4z" fill="#3b82d0" /></svg>
        </Slot>
      </div>
    </div>
  );
}

function TaskBtn({ active = false, className = "", children }: { active?: boolean; className?: string; children: React.ReactNode }) {
  return (
    <div className={"h-[40px] mt-[2px] w-[61px] shrink-0 rounded-t-[3px] border border-b-0 border-[#5d7c99] flex items-center justify-center " + (active ? "bg-gradient-to-b from-[#a8d5fa] to-[#7fb6ea] " : "bg-gradient-to-b from-[#c7d8e6]/80 to-[#9ebbd5]/60 ") + className}>
      {children}
    </div>
  );
}

function Dots() {
  return <div className="w-[12px] h-[30px] bg-[repeating-linear-gradient(0deg,#d4e0ea_0_2px,transparent_2px_6px)]" />;
}

function Taskbar() {
  return (
    <div className="h-[42px] flex shrink-0 overflow-hidden bg-[linear-gradient(90deg,#64849f_0%,#6e98bf_12%,#a3c2dd_40%,#aac6df_70%,#8ba6bf_84%,#6f8598_100%)] border-t border-[#6a7480]">
      <div className="w-[76px] shrink-0 flex items-center justify-center">
        <div className="w-[54px] h-[54px] mt-[6px] rounded-full bg-gradient-to-b from-[#9fd0ea] via-[#2b6fa6] to-[#1f7d8f] border border-[#5ba0c8] flex items-center justify-center">
          <svg width="28" height="26" viewBox="0 0 28 26"><path d="M2 4c4-2 7-2 11 0v9c-4-2-7-2-11 0z" fill="#e8563a" /><path d="M15 4c4 2 7 2 11 0v9c-4 2-7 2-11 0z" fill="#8ec63f" /><path d="M2 15c4-2 7-2 11 0v9c-4-2-7-2-11 0z" fill="#2f9bdc" /><path d="M15 15c4 2 7 2 11 0v9c-4 2-7 2-11 0z" fill="#f6c01f" /></svg>
        </div>
      </div>
      <Slot className="w-[60px]">
        <svg width="22" height="32" viewBox="0 0 22 32"><circle cx="6" cy="8" r="5" fill="#e2b33a" /><circle cx="16" cy="8" r="5" fill="#d9472f" /><circle cx="6" cy="22" r="6" fill="#77b53f" /><circle cx="16" cy="22" r="6" fill="#3a8fd6" /></svg>
      </Slot>
      <Slot className="w-[18px]"><Dots /></Slot>
      <Slot className="w-[81px] pl-[6px]">
        <svg width="24" height="28" viewBox="0 0 24 28"><ellipse cx="12" cy="14" rx="11" ry="13" fill="#4fbf3f" /><path d="M6 14h12c0-9-12-9-12 0 0 8 9 9 12 4" fill="none" stroke="#eef9e4" strokeWidth="3" /></svg>
      </Slot>
      <TaskBtn>
        <svg width="26" height="30" viewBox="0 0 26 30"><path d="M3 6h20v22H3z" fill="#e9cf7f" /><rect x="8" y="1" width="10" height="6" fill="#f0e3b0" /><path d="M6 28v-8h14v8" fill="#5aa7c7" /></svg>
      </TaskBtn>
      <TaskBtn className="ml-[4px] !w-[50px]">
        <svg width="28" height="28" viewBox="0 0 28 28"><circle cx="14" cy="14" r="13" fill="#e64a35" /><path d="M14 14L3 21a13 13 0 0 0 13 6z" fill="#4aa84f" /><path d="M14 14l12 0a13 13 0 0 1-10 13z" fill="#f4c20d" /><circle cx="14" cy="14" r="6" fill="#4a8cdc" stroke="#fff" strokeWidth="2" /></svg>
      </TaskBtn>
      <TaskBtn className="ml-[13px]">
        <div className="w-[22px] h-[30px] bg-[#e77a45] border border-[#a8532c] text-white font-bold text-[17px] flex items-center justify-center">P</div>
      </TaskBtn>
      <TaskBtn className="ml-[4px]">
        <div className="w-[22px] h-[30px] bg-[#d8efd8] border border-[#3c7a3c] text-[#1f6f2b] font-bold text-[18px] flex items-center justify-center">X</div>
      </TaskBtn>
      <TaskBtn active className="ml-[4px]">
        <div className="w-[22px] h-[30px] bg-[#4aa3ec] text-white font-bold text-[16px] flex items-center justify-center">W</div>
      </TaskBtn>
      <TaskBtn className="ml-[4px]">
        <div className="w-[24px] h-[24px] bg-[#222] border-t-[5px] border-[#888] text-white text-[10px] font-bold flex items-center justify-center">C:\</div>
      </TaskBtn>
      <TaskBtn className="ml-[4px]">
        <svg width="26" height="30" viewBox="0 0 26 30"><path d="M19 1L7 13 2 9 0 11l5 4-5 4 2 2 5-4 12 12 7-3V4zM19 9v12l-8-6z" fill="#1f6ed0" /></svg>
      </TaskBtn>
      <TaskBtn className="ml-[4px]">
        <svg width="26" height="28" viewBox="0 0 26 28"><path d="M4 14L16 3l7 6-12 12z" fill="#e35d5b" /><path d="M11 21l6-6 4 5-6 7z" fill="#8cb84e" /></svg>
      </TaskBtn>
      <TaskBtn className="ml-[4px]">
        <svg width="26" height="28" viewBox="0 0 26 28"><rect x="4" y="6" width="12" height="16" fill="#3a4a3a" /><rect x="16" y="9" width="8" height="8" fill="#b89a2a" /><circle cx="9" cy="5" r="4" fill="#4a5a4a" /></svg>
      </TaskBtn>
      <div className="w-[621px] shrink-0" />
      <Slot className="w-[14px]"><Dots /></Slot>
      <Slot className="w-[30px] ml-[7px]">
        <div className="w-[22px] h-[28px] rounded-[7px] bg-[#ec6a33] text-white font-bold text-[22px] flex items-center justify-center leading-none">S</div>
      </Slot>
      <Slot className="w-[30px] ml-[9px]"><svg width="10" height="6" viewBox="0 0 10 6"><path d="M0 6h10L5 0z" fill="#eef3f7" /></svg></Slot>
      <Slot className="w-[34px]">
        <svg width="24" height="28" viewBox="0 0 24 28"><rect x="5" y="2" width="18" height="18" fill="#dbe6ef" stroke="#567" /><path d="M9 7h10M9 11h10M9 15h6" stroke="#5a86ad" /><path d="M2 26l8-8" stroke="#333" strokeWidth="3" /></svg>
      </Slot>
      <Slot className="w-[38px]">
        <svg width="20" height="28" viewBox="0 0 20 28"><rect x="1" y="1" width="18" height="26" rx="9" fill="#1d3f7a" /><path d="M5 9l10 10-5 5V4l5 5L5 19" fill="none" stroke="#fff" strokeWidth="1.8" /></svg>
      </Slot>
      <Slot className="w-[28px]">
        <div className="w-[24px] h-[24px] rounded-full bg-[#e6d21a] border-2 border-[#3f8a2a] text-[#16601c] font-bold text-[18px] flex items-center justify-center leading-none">+</div>
      </Slot>
      <Slot className="w-[32px]">
        <svg width="20" height="28" viewBox="0 0 20 28"><path d="M5 2v6M13 2v6M2 8h16v10H2zM10 18v8" stroke="#eef3f7" strokeWidth="2" fill="#dfe6ec" /></svg>
      </Slot>
      <Slot className="w-[42px]">
        <svg width="20" height="24" viewBox="0 0 20 24"><path d="M2 9h4l5-5v16l-5-5H2z" fill="#e2e8ee" /><path d="M14 7c2 3 2 7 0 10" stroke="#dfe6ec" strokeWidth="2" fill="none" /></svg>
      </Slot>
      <div className="flex-1 flex items-center justify-end text-[17px] text-[#dfe7ee] pr-[27px]">0:24</div>
      <div className="w-[18px] border-l border-[#9fb0bf] bg-[#7d8f9f] shrink-0" />
    </div>
  );
}

export default function App() {
  return (
    <div className="w-[2340px] h-[1080px] bg-black overflow-hidden font-['Liberation_Sans','Noto_Sans_CJK_SC',sans-serif]">
      <div className="blur-[0.8px] ml-[270px] w-[1800px] h-[1080px] flex flex-col bg-[#e6e8eb] overflow-hidden">
        <TitleBar />
        <TabsRow />
        <Ribbon />
        <div className="h-[7px] shrink-0 bg-gradient-to-b from-[#bcbfc3] to-[#e1e3e6]" />
        <FormulaBar />
        <div className="h-[7px] shrink-0 bg-gradient-to-b from-[#e8e9eb] to-[#b9bcc0]" />
        <Sheet />
        <TabsBar />
        <StatusBar />
        <Taskbar />
      </div>
    </div>
  );
}
